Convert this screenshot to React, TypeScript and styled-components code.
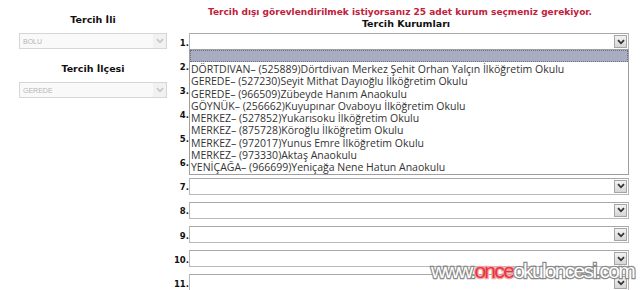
import * as React from 'react';
import styled, { createGlobalStyle } from 'styled-components';

const GlobalStyle = createGlobalStyle`
  html, body {
    margin: 0;
    padding: 0;
    background: #fff;
    width: 640px;
    height: 290px;
    overflow: hidden;
  }
  body {
    font-family: "DejaVu Sans", Verdana, sans-serif;
  }
`;

const schools = [
  'DÖRTDIVAN– (525889)Dörtdivan Merkez Şehit Orhan Yalçın İlköğretim Okulu',
  'GEREDE– (527230)Seyit Mithat Dayıoğlu İlköğretim Okulu',
  'GEREDE– (966509)Zübeyde Hanım Anaokulu',
  'GÖYNÜK– (256662)Kuyupınar Ovaboyu İlköğretim Okulu',
  'MERKEZ– (527852)Yukarısoku İlköğretim Okulu',
  'MERKEZ– (875728)Köroğlu İlköğretim Okulu',
  'MERKEZ– (972017)Yunus Emre İlköğretim Okulu',
  'MERKEZ– (973330)Aktaş Anaokulu',
  'YENİÇAĞA– (966699)Yeniçağa Nene Hatun Anaokulu',
];

const rows = [1, 2, 3, 4, 5, 6, 7, 8, 9, 10, 11];

function Chevron({ color }) {
  return (
    <svg width="8" height="6" viewBox="0 0 8 6">
      <path d="M1 1.2 L4 4.3 L7 1.2" fill="none" stroke={color} strokeWidth="1.8" />
    </svg>
  );
}

export default function App() {
  return (
    <Page>
      <GlobalStyle />
      <LeftColumn>
        <Heading>Tercih İli</Heading>
        <SmallSelect>
          <span>BOLU</span>
          <SmallArrow><Chevron color="#c8c8c8" /></SmallArrow>
        </SmallSelect>
        <Heading>Tercih İlçesi</Heading>
        <SmallSelect>
          <span>GEREDE</span>
          <SmallArrow><Chevron color="#c8c8c8" /></SmallArrow>
        </SmallSelect>
      </LeftColumn>

      <RightColumn>
        <Warning>Tercih dışı görevlendirilmek istiyorsanız 25 adet kurum seçmeniz gerekiyor.</Warning>
        <SubHeading>Tercih Kurumları</SubHeading>
        <RowList>
          {rows.map(n => (
            <Row key={n}>
              <RowLabel>{n}.</RowLabel>
              <SelectBox>
                <ArrowButton><Chevron color="#333" /></ArrowButton>
                {n === 1 && (
                  <DropList>
                    <Highlight />
                    {schools.map(s => (
                      <Option key={s}>{s}</Option>
                    ))}
                  </DropList>
                )}
              </SelectBox>
            </Row>
          ))}
        </RowList>
      </RightColumn>

      <Watermark>
        www.<Red>once</Red>okuloncesi.com
      </Watermark>
    </Page>
  );
}

const Page = styled.div`
  position: relative;
  display: flex;
  width: 640px;
  height: 290px;
  overflow: hidden;
`;

const LeftColumn = styled.div`
  width: 182px;
  flex-shrink: 0;
  display: flex;
  flex-direction: column;
  align-items: center;
  padding-top: 14px;
  padding-left: 4px;
  box-sizing: border-box;
`;

const Heading = styled.div`
  font-weight: bold;
  font-size: 9.5px;
  color: #111;
  margin-bottom: 8px;
  & + div { margin-bottom: 14px; }
`;

const SmallSelect = styled.div`
  width: 148px;
  height: 16px;
  box-sizing: border-box;
  border: 1px solid #d6d6d6;
  background: #f9f9f9;
  display: flex;
  align-items: center;
  justify-content: space-between;
  padding-left: 3px;
  font-size: 7px;
  color: #b5b5b5;
  font-family: "Liberation Sans", Arial, sans-serif;
`;

const SmallArrow = styled.span`
  width: 13px;
  height: 14px;
  display: flex;
  align-items: center;
  justify-content: center;
  background: #f1f1f1;
`;

const RightColumn = styled.div`
  flex: 1;
  display: flex;
  flex-direction: column;
  align-items: center;
  padding-top: 7px;
  margin-left: -10px;
`;

const Warning = styled.div`
  font-weight: bold;
  font-size: 9px;
  color: #c0213b;
  line-height: 11px;
  margin-left: -12px;
`;

const SubHeading = styled.div`
  font-weight: bold;
  font-size: 9.5px;
  color: #111;
  line-height: 11px;
  margin-bottom: 4px;
`;

const RowList = styled.div`
  align-self: stretch;
  display: flex;
  flex-direction: column;
  gap: 7.15px;
  padding-right: 11px;
`;

const Row = styled.div`
  display: grid;
  grid-template-columns: 17px 1fr;
  align-items: center;
`;

const RowLabel = styled.div`
  font-weight: bold;
  font-size: 8.5px;
  color: #111;
  text-align: right;
  padding-top: 2px;
`;

const SelectBox = styled.div`
  position: relative;
  height: 17px;
  box-sizing: border-box;
  border: 1px solid #b9b9b9;
  border-top-color: #a8a8a8;
  background: #fff;
  display: flex;
  justify-content: flex-end;
  align-items: center;
  padding-right: 1px;
`;

const ArrowButton = styled.span`
  width: 13px;
  height: 13px;
  box-sizing: border-box;
  border: 1px solid #a5a5a5;
  background: linear-gradient(#f2f2f2, #d6d6d6);
  display: flex;
  align-items: center;
  justify-content: center;
`;

const DropList = styled.div`
  position: absolute;
  top: 15px;
  left: -1px;
  right: -1px;
  height: 126px;
  box-sizing: border-box;
  border: 1px solid #9f9f9f;
  background: #fff;
  z-index: 2;
  font-family: "Open Sans", "Noto Sans", sans-serif;
  font-size: 10.5px;
  color: #333;
`;

const Highlight = styled.div`
  height: 12px;
  margin-bottom: 1px;
  background: #a9adc1;
  border: 1px dotted #6d6f80;
  box-sizing: border-box;
`;

const Option = styled.div`
  height: 12.25px;
  line-height: 12.25px;
  padding-left: 1px;
  white-space: nowrap;
`;

const Watermark = styled.div`
  position: absolute;
  left: 431px;
  top: 259px;
  font-family: "Liberation Sans", Arial, sans-serif;
  font-size: 21px;
  letter-spacing: -1.7px;
  color: #fff;
  -webkit-text-stroke: 2.4px #8a8a8a;
  paint-order: stroke fill;
  white-space: nowrap;
  z-index: 3;
`;

const Red = styled.span`
  color: #e8343c;
  -webkit-text-stroke: 2.4px #f6a3a6;
`;
